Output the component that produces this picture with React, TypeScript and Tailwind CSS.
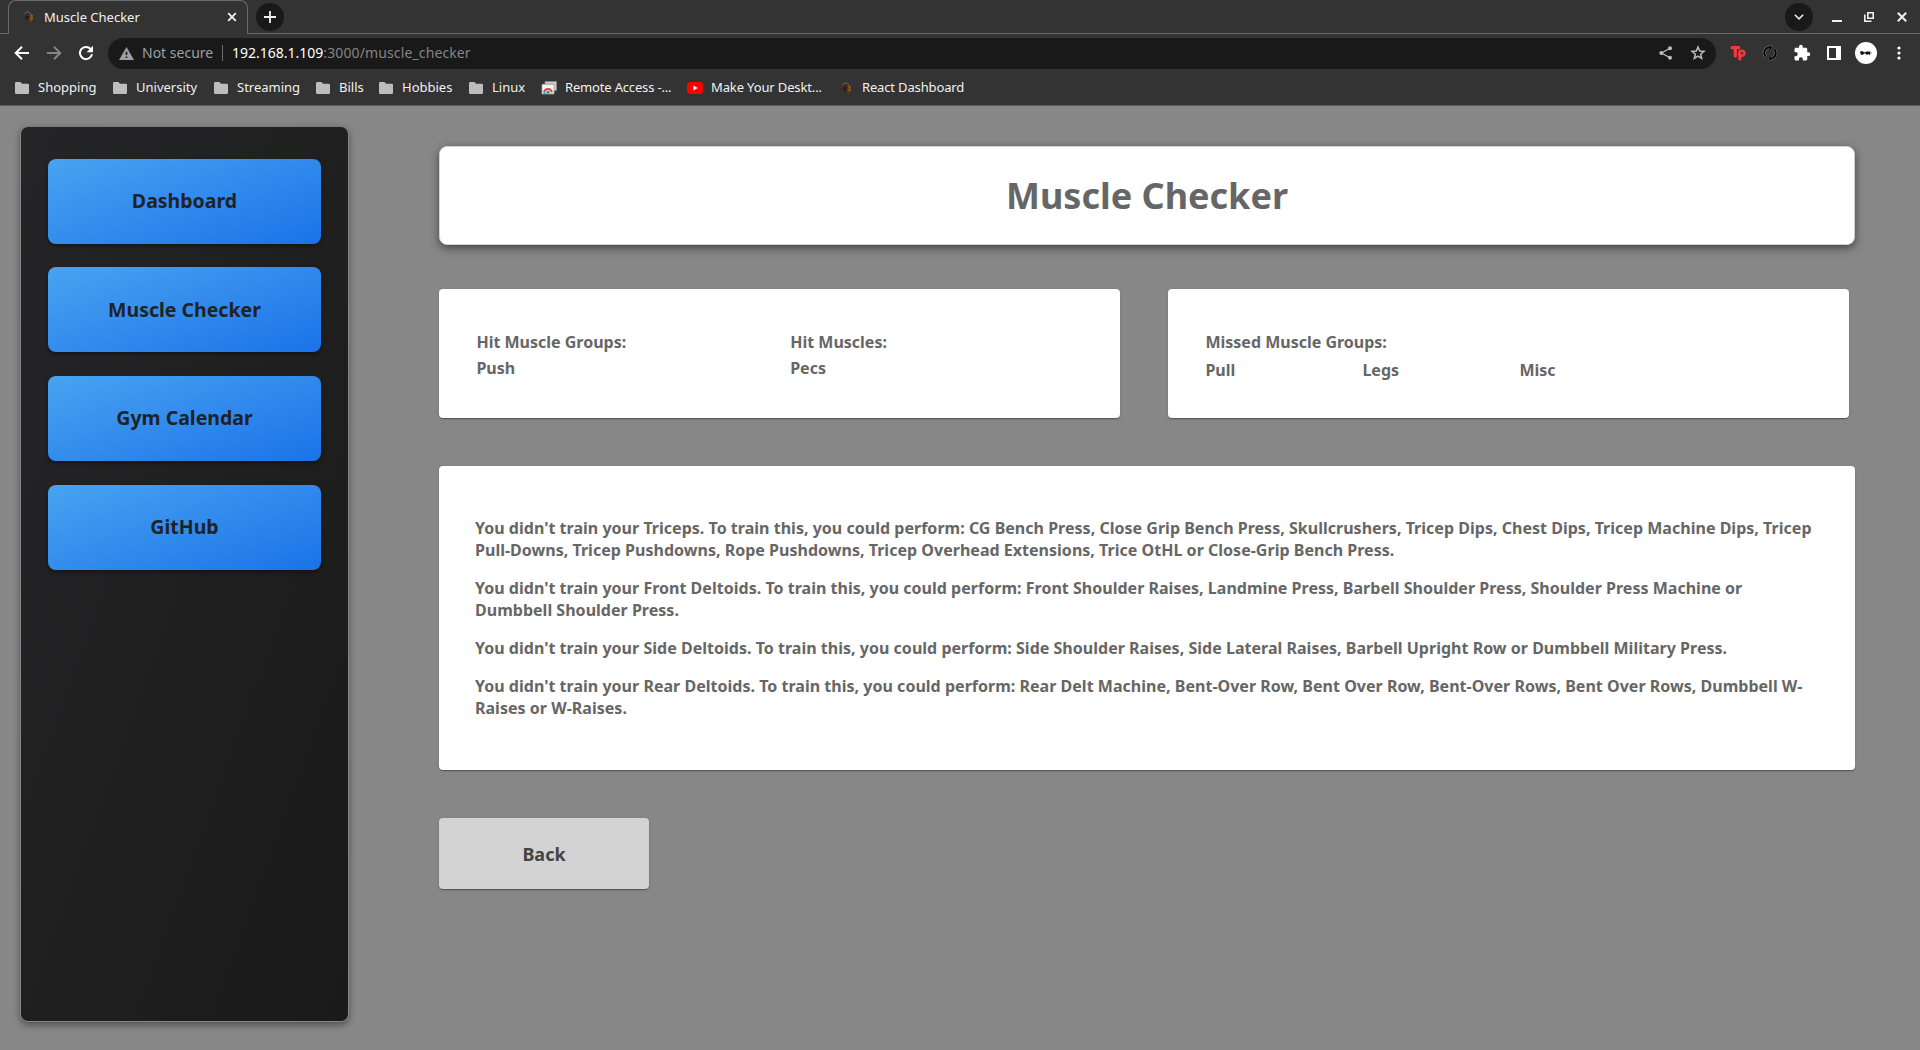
import React from "react";

const ui = "font-['Noto_Sans',sans-serif]";

function Dumbbell() {
  return (
    <svg width="16" height="16" viewBox="0 0 16 16" className="shrink-0">
      <path d="M4 7l2-3 4 1 1 3-1 4-4 1-2-3z" fill="#3a2a20" />
      <path d="M5 5.500C5 3.500 6 2.500 8 3c1.500.4 2.500 1 2.500 3" fill="none" stroke="#73675f" strokeWidth="1" />
      <path d="M10 5.500h2.500v2H13v3h-1v2H9.500v-3z" fill="#75410f" />
      <path d="M11 6h1.500v1.500H11zM11 9h1.500v1.500H11z" fill="#c06a12" />
      <path d="M6 7h2v3H6z" fill="#21160f" />
    </svg>
  );
}

function Folder() {
  return (
    <svg width="14" height="12" viewBox="0 0 14 12" className="shrink-0">
      <path d="M1.300 0h4.200L7 1.700h5.700A1.300 1.300 0 0 1 14 3v7.700a1.300 1.300 0 0 1-1.300 1.300H1.300A1.300 1.300 0 0 1 0 10.700V1.300A1.300 1.300 0 0 1 1.300 0z" fill="#bdbdbd" />
    </svg>
  );
}

const folders = [
  ["Shopping", "w-[98px]"],
  ["University", "w-[101px]"],
  ["Streaming", "w-[102px]"],
  ["Bills", "w-[63px]"],
  ["Hobbies", "w-[90px]"],
  ["Linux", "w-[72px]"],
];

function TabStrip() {
  return (
    <div className="flex h-[34px] items-start border-b border-[#6a6a6a] bg-[#333333]">
      <div className="ml-2 flex h-[34px] w-[240px] items-center rounded-t-[8px] border border-b-0 border-[#6a6a6a] bg-[#333333] pb-px pl-[11px] pr-[10px]">
        <Dumbbell />
        <span className="ml-2 flex-1 pb-px text-[13px] leading-4 text-[#f1f1f1]">Muscle Checker</span>
        <svg width="10" height="10" viewBox="0 0 10 10">
          <path d="M1.200 1.200l7.600 7.600M8.800 1.200L1.200 8.800" stroke="#f1f1f1" strokeWidth="1.800" />
        </svg>
      </div>
      <div className="ml-2 mt-[3px] flex size-7 items-center justify-center rounded-full bg-[#191919]">
        <svg width="12" height="12" viewBox="0 0 12 12">
          <path d="M6 0v12M0 6h12" stroke="#f1f1f1" strokeWidth="1.800" />
        </svg>
      </div>
      <div className="ml-auto mt-[3px] flex size-7 items-center justify-center rounded-full bg-[#191919]">
        <svg width="10" height="6" viewBox="0 0 10 6">
          <path d="M.8.700L5 4.900 9.200.7" fill="none" stroke="#e6e6e6" strokeWidth="1.600" />
        </svg>
      </div>
      <div className="ml-[19px] mr-[13px] flex h-[34px] w-[75px] items-center">
        <svg width="10" height="10" viewBox="0 0 10 10">
          <path d="M0 8h10v2H0z" fill="#f1f1f1" />
        </svg>
        <svg width="10" height="10" viewBox="0 0 10 10" className="ml-[22px]">
          <path d="M3.800.8h5.400v5.400H3.800z" fill="none" stroke="#f1f1f1" strokeWidth="1.600" />
          <path d="M.8 2.500v6.700h6.700" fill="none" stroke="#f1f1f1" strokeWidth="1.600" />
        </svg>
        <svg width="10" height="10" viewBox="0 0 10 10" className="ml-[23px]">
          <path d="M.8.800l8.400 8.400M9.200.8L.8 9.200" stroke="#f1f1f1" strokeWidth="2" />
        </svg>
      </div>
    </div>
  );
}

function AddressBar() {
  return (
    <div className="flex h-[39px] items-center bg-[#333333] pb-px">
      <svg width="16" height="16" viewBox="0 0 16 16" className="ml-[14px]">
        <path d="M15 8H2.500M8 1.700L1.700 8 8 14.300" fill="none" stroke="#fff" strokeWidth="2" />
      </svg>
      <svg width="16" height="16" viewBox="0 0 16 16" className="ml-4">
        <path d="M1 8h12.500M8 1.700L14.300 8 8 14.300" fill="none" stroke="#858585" strokeWidth="2" />
      </svg>
      <svg width="16" height="16" viewBox="0 0 16 16" className="ml-4">
        <path d="M12.600 4A6.100 6.100 0 1 0 14 9.300" fill="none" stroke="#fff" strokeWidth="2" />
        <path d="M15 .8v6.400H8.600z" fill="#fff" />
      </svg>
      <div className="ml-[14px] flex h-[31px] w-[1608px] items-center rounded-full bg-[#191919] pl-[11px] pr-[10px] text-[14px]">
        <svg width="15" height="13" viewBox="0 0 15 13">
          <path d="M7.500 0L15 13H0z" fill="#9aa0a6" />
          <path d="M6.700 4.700h1.600V8H6.700zM6.700 9.500h1.600V11H6.700z" fill="#191919" />
        </svg>
        <span className="ml-2 w-[73px] whitespace-nowrap pb-px text-[#9aa0a6]">Not secure</span>
        <span className="ml-[7px] h-4 w-px bg-[#6b6e72]" />
        <span className="ml-[9px] pb-px tracking-[0.12px] text-[#858585]">
          <span className="tracking-normal text-white">192.168.1.109</span>:3000/muscle_checker
        </span>
        <svg width="14" height="14" viewBox="0 0 14 14" className="ml-auto">
          <path d="M11 2.300L2.500 7l8.500 4.700" fill="none" stroke="#bdbdbd" strokeWidth="1.300" />
          <circle cx="11" cy="2.300" r="2" fill="#bdbdbd" />
          <circle cx="2.300" cy="7" r="2" fill="#bdbdbd" />
          <circle cx="11" cy="11.700" r="2" fill="#bdbdbd" />
        </svg>
        <svg width="16" height="16" viewBox="0 0 16 16" className="ml-[17px]">
          <path d="M8 2l1.700 4 4.300.4-3.300 2.800 1 4.300L8 11.200l-3.700 2.300 1-4.300L2 6.400 6.300 6z" fill="none" stroke="#bdbdbd" strokeWidth="1.500" />
        </svg>
      </div>
      <svg width="16" height="16" viewBox="0 0 16 16" className="ml-[14px]">
        <path d="M2.200 2.700h6.600M5.300 3v8" fill="none" stroke="#f43b3b" strokeWidth="3.200" strokeLinecap="round" />
        <path d="M9.800 14V8.500" stroke="#f43b3b" strokeWidth="3" strokeLinecap="round" />
        <circle cx="11.800" cy="8.300" r="2.600" fill="none" stroke="#f43b3b" strokeWidth="2.400" />
      </svg>
      <svg width="16" height="16" viewBox="0 0 16 16" className="ml-4">
        <circle cx="8" cy="8" r="5.800" fill="none" stroke="#6d6d6d" strokeWidth="3.200" strokeDasharray="15.600 2.620" strokeDashoffset="5" />
        <circle cx="8" cy="8" r="5.800" fill="none" stroke="#050505" strokeWidth="1.900" strokeDasharray="15 3.220" strokeDashoffset="4.700" />
        <path d="M9 .8L6.300 2.500 9 4.500zM7 11.500l2.700 2L7 15.200z" fill="#050505" />
      </svg>
      <svg width="18" height="18" viewBox="0 0 24 24" className="ml-[15px]" fill="#fff">
        <path d="M20.500 11H19V7c0-1.100-.9-2-2-2h-4V3.500a2.500 2.500 0 0 0-5 0V5H4c-1.100 0-1.990.9-1.990 2v3.800H3.500c1.490 0 2.700 1.210 2.700 2.700s-1.210 2.700-2.700 2.700H2V20c0 1.100.9 2 2 2h3.800v-1.500c0-1.490 1.210-2.700 2.700-2.700s2.700 1.210 2.700 2.700V22H17c1.100 0 2-.9 2-2v-4h1.500a2.500 2.500 0 0 0 0-5z" />
      </svg>
      <svg width="14" height="14" viewBox="0 0 14 14" className="ml-4">
        <path d="M0 0h14v14H0zM2 2v10h7V2z" fill="#fff" fillRule="evenodd" />
      </svg>
      <svg width="22" height="22" viewBox="0 0 22 22" className="ml-[14px]">
        <circle cx="11" cy="11" r="11" fill="#fff" />
        <path d="M5.300 9.200h2.500L9 10.300h1.500l1-.9h3.800v3.300h-1.500v-.8h-1v.8h-1.500l-.8-1.300H9l-1 1.300H6L5.300 11z" fill="#101010" />
        <path d="M16 10.300h1v1.500h-1z" fill="#c9b2a5" />
      </svg>
      <svg width="4" height="14" viewBox="0 0 4 14" className="ml-[19.500px]" fill="#fff">
        <circle cx="2" cy="2" r="1.600" />
        <circle cx="2" cy="7" r="1.600" />
        <circle cx="2" cy="12" r="1.600" />
      </svg>
    </div>
  );
}

function Bookmarks() {
  return (
    <div className="flex h-[33px] items-center whitespace-nowrap border-b border-[#5c5c5c] bg-[#333333] pb-[2px] pl-[15px] text-[13px] text-[#f1f1f1]">
      {folders.map(([name, width]) => (
        <div key={name} className={`${width} flex shrink-0 items-center gap-[9px]`}>
          <Folder />
          <span>{name}</span>
        </div>
      ))}
      <div className="flex w-[146px] items-center gap-[8px]">
        <svg width="16" height="14" viewBox="0 0 16 14">
          <path d="M4 .5h11.500v9H13V3H4z" fill="#cfcfcf" stroke="#8d8d8d" strokeWidth=".6" />
          <path d="M1 3.300h12v9.700H1z" fill="#f5f5f5" stroke="#aaa" strokeWidth=".7" />
          <path d="M3.200 11a3.900 3.900 0 0 1 7.600 0" fill="none" stroke="#ea4335" strokeWidth="2" />
          <path d="M2.500 9.500l2.500 3.500H2.500z" fill="#34a853" />
          <path d="M11.500 10v3H9z" fill="#fbbc05" />
          <circle cx="7" cy="11.200" r="1.700" fill="#4285f4" />
        </svg>
        <span className="tracking-[-0.17px]">Remote Access -...</span>
      </div>
      <div className="flex w-[151px] items-center gap-[8px]">
        <svg width="16" height="12" viewBox="0 0 16 12">
          <rect width="16" height="12" rx="3" fill="#f00" />
          <path d="M6.300 3.500L10.700 6 6.300 8.500z" fill="#fff" />
        </svg>
        <span className="tracking-[-0.13px]">Make Your Deskt...</span>
      </div>
      <div className="flex items-center gap-[8px]">
        <Dumbbell />
        <span className="tracking-[-0.15px]">React Dashboard</span>
      </div>
    </div>
  );
}

const links = ["Dashboard", "Muscle Checker", "Gym Calendar", "GitHub"];

const advice = [
  "You didn't train your Triceps. To train this, you could perform: CG Bench Press, Close Grip Bench Press, Skullcrushers, Tricep Dips, Chest Dips, Tricep Machine Dips, Tricep Pull-Downs, Tricep Pushdowns, Rope Pushdowns, Tricep Overhead Extensions, Trice OtHL or Close-Grip Bench Press.",
  "You didn't train your Front Deltoids. To train this, you could perform: Front Shoulder Raises, Landmine Press, Barbell Shoulder Press, Shoulder Press Machine or Dumbbell Shoulder Press.",
  "You didn't train your Side Deltoids. To train this, you could perform: Side Shoulder Raises, Side Lateral Raises, Barbell Upright Row or Dumbbell Military Press.",
  "You didn't train your Rear Deltoids. To train this, you could perform: Rear Delt Machine, Bent-Over Row, Bent Over Row, Bent-Over Rows, Bent Over Rows, Dumbbell W-Raises or W-Raises.",
];

const cardShadow = "shadow-[0_2px_1px_-1px_rgba(0,0,0,0.2),0_1px_1px_0_rgba(0,0,0,0.14),0_1px_3px_0_rgba(0,0,0,0.12)]";

export default function App() {
  return (
    <div className={`${ui} flex h-[1050px] w-[1920px] flex-col overflow-hidden bg-[#878787]`}>
      <header className="h-[106px] shrink-0">
        <TabStrip />
        <AddressBar />
        <Bookmarks />
      </header>
      <div className="flex flex-1 pl-[21px] pt-[21px]">
        <nav className="flex h-[894px] w-[327px] shrink-0 flex-col gap-[23.700px] rounded-[7px] bg-linear-to-br from-[#252527] to-[#1a1a1a] px-[27px] pt-[31.700px] shadow-[0_1px_0_#858585,1px_0_0_#858585,-1px_0_0_#858585,0_3px_7px_1px_rgba(0,0,0,0.4)]">
          {links.map((link) => (
            <a key={link} className="flex h-[85px] shrink-0 items-center justify-center rounded-[8px] bg-linear-[160deg] from-[#49a3f1] to-[#1a73e8] pb-[0.400px] text-[19.500px] leading-7 font-bold text-[#1f2227] shadow-[0_2px_4px_rgba(0,0,0,0.4)]">
              {link}
            </a>
          ))}
        </nav>
        <main className="ml-[91px] flex w-[1416px] flex-col pt-[19px] font-bold text-[#666666]">
          <h1 className="flex h-[99px] items-center justify-center rounded-[8px] border border-[#d2d2d2] bg-white text-[36px] shadow-[0_3px_8px_rgba(0,0,0,0.5)]">
            Muscle Checker
          </h1>
          <div className="mt-11 flex gap-12 text-[16px] leading-[22px]">
            <section className={`${cardShadow} grid h-[129px] w-[681px] grid-cols-2 rounded-[4px] bg-white pl-[37.400px] pr-[16px] pt-[42px]`}>
              <div className="flex flex-col gap-1">
                <span>Hit Muscle Groups:</span>
                <span>Push</span>
              </div>
              <div className="flex flex-col gap-1">
                <span>Hit Muscles:</span>
                <span>Pecs</span>
              </div>
            </section>
            <section className={`${cardShadow} flex h-[129px] w-[681px] flex-col gap-[6px] rounded-[4px] bg-white px-[37.400px] pt-[42px]`}>
              <span>Missed Muscle Groups:</span>
              <div className="grid grid-cols-[157px_157px_157px]">
                <span>Pull</span>
                <span>Legs</span>
                <span>Misc</span>
              </div>
            </section>
          </div>
          <section className={`${cardShadow} mt-12 flex h-[304px] flex-col gap-4 rounded-[4px] bg-white pl-9 pr-8 pt-[51px] text-[16px] leading-[22px] tracking-[0.020px]`}>
            {advice.map((line) => (
              <p key={line}>{line}</p>
            ))}
          </section>
          <button className={`${cardShadow} mt-12 h-[71px] w-[210px] rounded-[4px] bg-[#d3d3d3] pt-[2px] text-[18px] font-bold text-[#444444]`}>
            Back
          </button>
        </main>
      </div>
    </div>
  );
}
